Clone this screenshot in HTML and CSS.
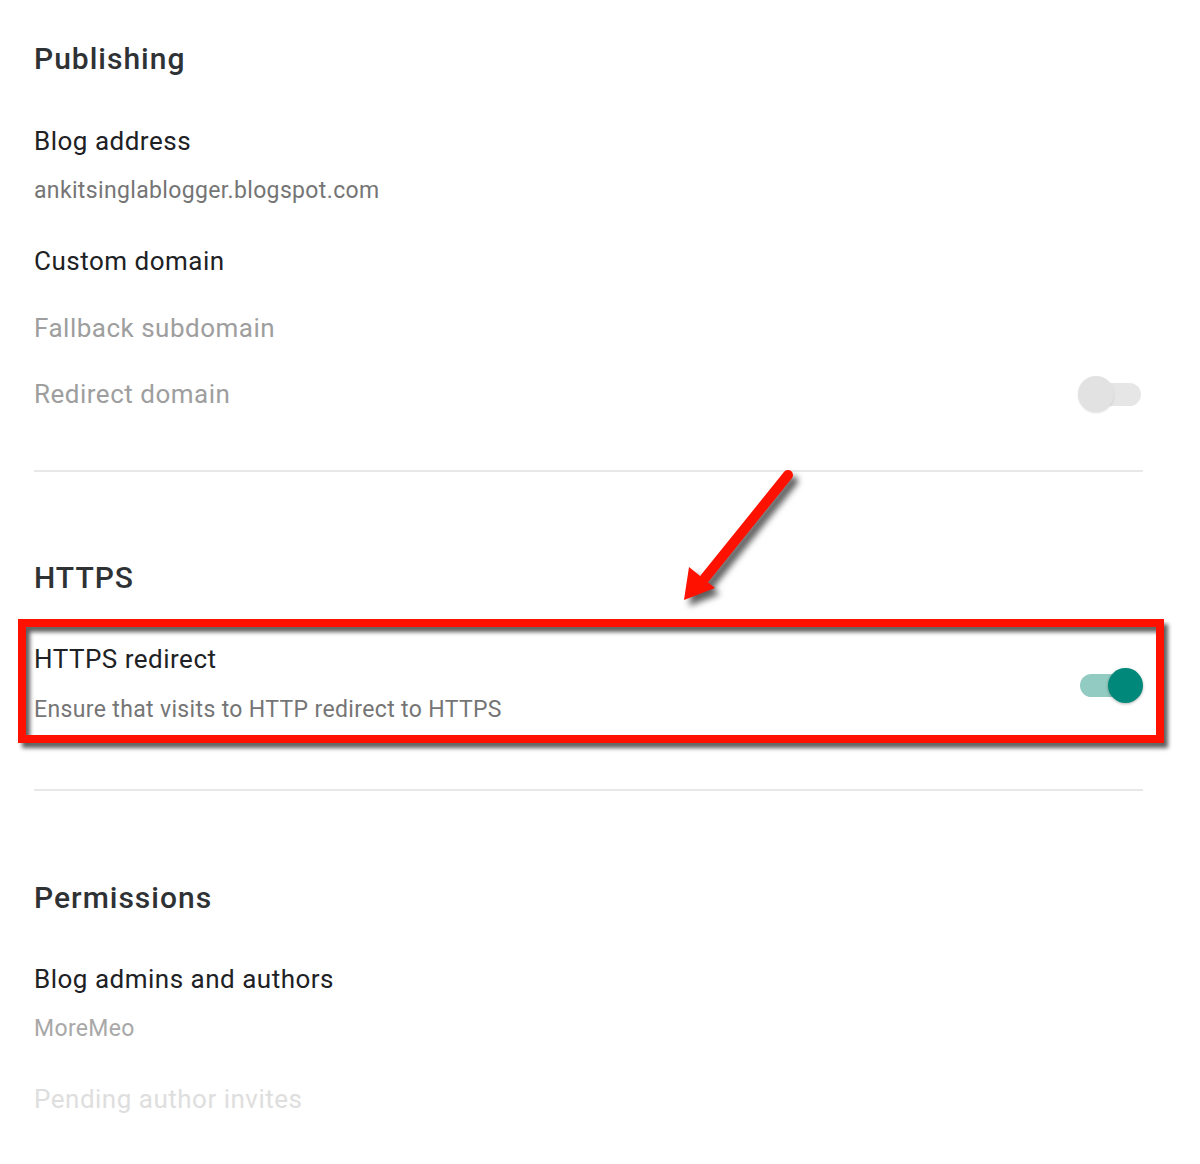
FILE: index.html
```html
<!DOCTYPE html>
<html>
<head>
<meta charset="utf-8">
<link rel="stylesheet" href="styles.css">
</head>
<body>
<main class="page">
  <section class="section">
    <h2 class="heading heading-first">Publishing</h2>
    <div class="row">
      <div class="text">
        <div class="label">Blog address</div>
        <div class="sub">ankitsinglablogger.blogspot.com</div>
      </div>
    </div>
    <div class="row row-custom">
      <div class="text"><div class="label">Custom domain</div></div>
    </div>
    <div class="row row-fallback">
      <div class="text"><div class="label disabled">Fallback subdomain</div></div>
    </div>
    <div class="row row-redirect">
      <div class="text"><div class="label disabled">Redirect domain</div></div>
      <div class="toggle off"><span class="track"></span><span class="thumb"></span></div>
    </div>
  </section>
  <hr class="divider divider-1">
  <section class="section">
    <h2 class="heading heading-https">HTTPS</h2>
    <div class="row row-highlight">
      <div class="text">
        <div class="label">HTTPS redirect</div>
        <div class="sub">Ensure that visits to HTTP redirect to HTTPS</div>
      </div>
      <div class="toggle on"><span class="track"></span><span class="thumb"></span></div>
    </div>
  </section>
  <hr class="divider divider-2">
  <section class="section">
    <h2 class="heading heading-perm">Permissions</h2>
    <div class="row row-admins">
      <div class="text">
        <div class="label">Blog admins and authors</div>
        <div class="sub light">MoreMeo</div>
      </div>
    </div>
    <div class="row row-pending">
      <div class="text"><div class="label faint">Pending author invites</div></div>
    </div>
  </section>
  <svg class="arrow" width="160" height="170" viewBox="0 0 160 170">
    <line x1="128" y1="15" x2="45" y2="118" stroke="#ff1100" stroke-width="10" stroke-linecap="round"/>
    <polygon points="24,140 29,107 55,128" fill="#ff1100"/>
  </svg>
</main>
</body>
</html>
```
FILE: styles.css
```css
html, body {
  margin: 0;
  padding: 0;
  background: #ffffff;
}
body {
  font-family: Roboto, "Liberation Sans", Arial, sans-serif;
  color: #202124;
}
.page {
  position: relative;
  width: 1109px;
  padding: 0 0 0 34px;
  height: 1164px;
  box-sizing: content-box;
}
.section {
  display: flex;
  flex-direction: column;
}
.heading {
  margin: 0;
  font-size: 30px;
  line-height: 36px;
  font-weight: 500;
  letter-spacing: 1px;
  color: #2f3235;
}
.heading-first { margin-top: 41px; }
.heading-https { margin-top: 88px; }
.heading-perm { margin-top: 89px; }
.row {
  display: flex;
  align-items: center;
  justify-content: space-between;
  margin-top: 47.5px;
}
.row-custom { margin-top: 40px; }
.row-fallback { margin-top: 35px; }
.row-redirect { margin-top: 32px; }
.row-highlight { margin-top: 46.5px; position: relative; }
.row-admins { margin-top: 46.5px; }
.row-pending { margin-top: 40px; }
.text {
  display: flex;
  flex-direction: column;
}
.label {
  font-size: 26px;
  line-height: 32px;
  letter-spacing: 0.5px;
  color: #202124;
}
.label.disabled { color: #9e9e9e; }
.label.faint { color: #dedede; }
.sub {
  margin-top: 20px;
  font-size: 23px;
  line-height: 28px;
  letter-spacing: 0.35px;
  color: #757575;
}
.sub.light { color: #a8a8a8; }
.row-highlight .sub { margin-top: 21px; }
.row-highlight::after {
  content: "";
  position: absolute;
  left: -16px;
  right: -21px;
  top: -23.5px;
  bottom: -19.5px;
  border: 8px solid #ff1100;
  filter: drop-shadow(4px 5px 2px rgba(40, 40, 40, 0.75));
  pointer-events: none;
}
.toggle {
  position: relative;
  width: 63px;
  height: 36px;
  flex: none;
}
.toggle .track {
  position: absolute;
  left: 0;
  top: 7px;
  width: 61px;
  height: 23px;
  border-radius: 12px;
}
.toggle .thumb {
  position: absolute;
  top: 0;
  width: 36px;
  height: 36px;
  border-radius: 50%;
}
.toggle.off .track { background: #e6e6e6; }
.toggle.off .thumb {
  left: -2px;
  background: #e2e2e2;
  box-shadow: 0 1px 2px rgba(0, 0, 0, 0.12);
}
.toggle.on { margin-top: 5px; }
.toggle.on .track { background: #92cbc1; top: 6px; }
.toggle.on .thumb {
  left: 28px;
  width: 35px;
  height: 35px;
  background: #00897b;
  box-shadow: 0 1px 3px rgba(0, 0, 0, 0.3);
}
.divider {
  margin: 58.5px 0 0 0;
  border: 0;
  height: 2px;
  background: #e8e8e8;
}
.divider-2 { margin-top: 65.5px; }
.arrow {
  position: absolute;
  left: 660px;
  top: 460px;
  overflow: visible;
  filter: drop-shadow(5px 6px 3px rgba(40, 40, 40, 0.75));
}
```
